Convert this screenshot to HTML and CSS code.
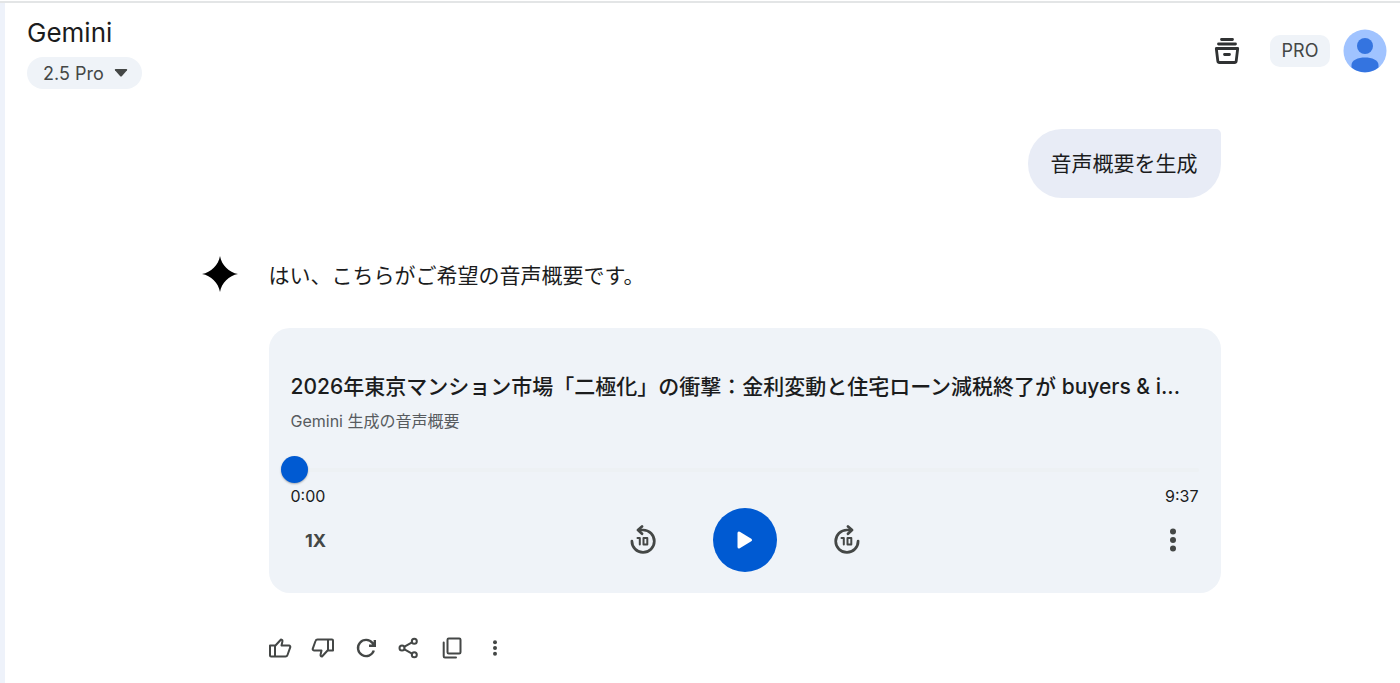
FILE: index.html
```html
<!DOCTYPE html>
<html lang="ja">
<head>
  <meta charset="UTF-8">
  <meta name="viewport" content="width=device-width, initial-scale=1.0">
  <title>Gemini</title>
  <link rel="stylesheet" href="styles.css">
</head>
<body>
  <div class="app">
    <!-- Header -->
    <header class="header">
      <div class="brand">
        <h1>Gemini</h1>
        <div class="model">
          <select aria-label="モデル">
            <option>2.5 Pro</option>
          </select>
          <svg class="model-arrow" width="14" height="8" viewBox="0 0 14 8"><path d="M1.5 0h11q1.2.2.5 1.200L8 7q-1 1-2 0L1 1.200Q.3.200 1.500 0z" fill="currentColor"/></svg>
        </div>
      </div>
      <div class="account">
        <button class="icon-btn" aria-label="アーカイブ">
          <svg width="26" height="28" viewBox="0 0 26 28" fill="none" stroke="currentColor" stroke-width="2.800" stroke-linecap="round" stroke-linejoin="round">
            <path d="M7.500 2.500h11M4.500 7h17M2.300 11.500h21.400l-1.500 12.500q-.2 1.500-1.700 1.500h-15q-1.500 0-1.700-1.500zM10.500 17.500h5"/>
          </svg>
        </button>
        <span class="badge">PRO</span>
        <button class="avatar" aria-label="アカウント">
          <svg width="44" height="44" viewBox="0 0 44 44">
            <circle cx="22" cy="22" r="21.500" fill="#a0c3ff"/>
            <circle cx="22" cy="17" r="8" fill="#3474e0"/>
            <path d="M8.500 38.500V36C8.500 31 15 28.500 22 28.500S35.500 31 35.500 36v2.500A21.500 21.500 0 0 1 8.500 38.500z" fill="#3474e0"/>
          </svg>
        </button>
      </div>
    </header>

    <!-- Conversation -->
    <main class="chat">
      <p class="prompt">音声概要を生成</p>

      <div class="reply">
        <svg class="spark" width="36" height="36" viewBox="0 0 36 36"><path d="M18 0C19.500 9 27 16.500 36 18 27 19.500 19.500 27 18 36 16.500 27 9 19.500 0 18 9 16.500 16.500 9 18 0z" fill="#000"/></svg>
        <div class="reply-body">
          <p class="answer">はい、こちらがご希望の音声概要です。</p>

          <section class="player">
            <h2>2026年東京マンション市場「二極化」の衝撃：金利変動と住宅ローン減税終了が buyers &amp; i...</h2>
            <p class="subtitle">Gemini 生成の音声概要</p>
            <input class="seek" type="range" min="0" max="577" value="0" aria-label="再生位置">
            <div class="times"><span>0:00</span><span>9:37</span></div>
            <div class="controls">
              <button class="speed">1X</button>
              <div class="transport">
                <button class="skip" aria-label="10秒戻る">
                  <svg width="28" height="30" viewBox="0 0 28 30" fill="none" stroke="currentColor" stroke-width="2.700" stroke-linecap="round" stroke-linejoin="round">
                    <path d="M2.900 16A11.200 11.200 0 1 0 14.100 5H9.500"/>
                    <path d="M13 1.500 9 5l4 3.800"/>
                    <path stroke-width="2" d="M8.500 13h2.300v6.500M14.500 13h3.800v6.500h-3.800z"/>
                  </svg>
                </button>
                <button class="play" aria-label="再生">
                  <svg width="18" height="20" viewBox="0 0 18 20"><path d="M3 3v14l11.500-7z" fill="#fff" stroke="#fff" stroke-width="3" stroke-linejoin="round"/></svg>
                </button>
                <button class="skip" aria-label="10秒進む">
                  <svg width="28" height="30" viewBox="0 0 28 30" fill="none" stroke="currentColor" stroke-width="2.700" stroke-linecap="round" stroke-linejoin="round">
                    <path d="M25.100 16A11.200 11.200 0 1 1 13.900 5H18.500"/>
                    <path d="M15 1.500 19 5l-4 3.800"/>
                    <path stroke-width="2" d="M8.500 13h2.300v6.500M14.500 13h3.800v6.500h-3.800z"/>
                  </svg>
                </button>
              </div>
              <button class="more" aria-label="その他">
                <svg width="8" height="24" viewBox="0 0 8 24" fill="currentColor"><circle cx="4" cy="3.500" r="3"/><circle cx="4" cy="12" r="3"/><circle cx="4" cy="20.500" r="3"/></svg>
              </button>
            </div>
          </section>

          <div class="actions">
            <button aria-label="良い回答">
              <svg width="24" height="24" viewBox="0 0 24 24"><path d="M2 9.500h5v11H3q-1 0-1-1zM7 10l6-6.500q1.800.3 1.400 2L13.500 9.500H21q1.500.2 1.300 1.700L19.500 19q-.5 1.500-2 1.500H7z"/></svg>
            </button>
            <button aria-label="悪い回答">
              <svg width="24" height="24" viewBox="0 0 24 24"><path d="M22 14.500h-5v-11h4q1 0 1 1zM17 14l-6 6.500q-1.800-.3-1.400-2l.9-4H3q-1.500-.2-1.300-1.700L4.500 5q.5-1.500 2-1.500H17z"/></svg>
            </button>
            <button aria-label="やり直す">
              <svg class="bold" width="24" height="24" viewBox="0 0 24 24"><path d="M19.800 14.500A8.100 8.100 0 1 1 18.500 7L20 9M20.800 4v5.800H15"/></svg>
            </button>
            <button aria-label="共有">
              <svg width="24" height="24" viewBox="0 0 24 24"><path d="M7.500 10.700 15 6.300M7.500 13.300l7.500 4.400"/><circle cx="5" cy="12" r="2.500"/><circle cx="17.300" cy="5.200" r="2.500"/><circle cx="17.300" cy="18.800" r="2.500"/></svg>
            </button>
            <button aria-label="コピー">
              <svg width="24" height="24" viewBox="0 0 24 24"><rect x="7.500" y="2.500" width="13" height="15" rx="1.200"/><path d="M3.700 6.500v13.700q0 1.200 1.200 1.200H16"/></svg>
            </button>
            <button aria-label="その他">
              <svg class="dots" width="24" height="24" viewBox="0 0 24 24"><circle cx="12" cy="6.200" r="2"/><circle cx="12" cy="12" r="2"/><circle cx="12" cy="17.800" r="2"/></svg>
            </button>
          </div>
        </div>
      </div>
    </main>
  </div>
</body>
</html>
```
FILE: styles.css
```css
* {
  box-sizing: border-box;
}
body {
  margin: 0;
  padding-top: 1px;
  background: #fff;
  color: #1b1c1d;
  font-family: Inter, "Noto Sans CJK JP", sans-serif;
}
h1, h2, p {
  margin: 0;
  font-weight: 400;
}
button {
  display: flex;
  align-items: center;
  justify-content: center;
  padding: 0;
  border: 0;
  background: none;
  color: #444746;
  font-family: inherit;
  cursor: pointer;
}

.app {
  min-height: calc(100vh - 1px);
  border-top: 2px solid #e3e5e6;
  background: linear-gradient(to right, #eef2fa 5px, #fff 5px);
  padding-left: 5px;
}

/* Header */
.header {
  display: flex;
  justify-content: space-between;
  padding: 14px 13px 0 22px;
}
.brand h1 {
  font-size: 26px;
  line-height: 32px;
}
.model {
  position: relative;
  width: 115px;
  margin-top: 8px;
  color: #444746;
}
.model select {
  display: block;
  width: 100%;
  height: 32px;
  padding: 0 16px;
  border: 0;
  border-radius: 16px;
  background: #eff3f8;
  color: inherit;
  font-family: inherit;
  font-size: 18px;
  appearance: none;
}
.model-arrow {
  position: absolute;
  right: 14px;
  top: 12px;
  pointer-events: none;
}
.account {
  display: flex;
  align-items: center;
  align-self: flex-start;
  margin-top: 12px;
}
.icon-btn {
  width: 44px;
  height: 44px;
  margin-right: 21px;
  color: #303233;
}
.badge {
  width: 60px;
  margin-right: 13px;
  border-radius: 10px;
  background: #eff3f8;
  color: #444746;
  font-size: 18px;
  line-height: 32px;
  text-align: center;
}
.avatar {
  border-radius: 50%;
}

/* Conversation */
.chat {
  display: flex;
  flex-direction: column;
  max-width: 1036px;
  margin: 40px auto 0;
  padding-left: 17px;
}
.prompt {
  align-self: flex-end;
  padding: 20px 23px;
  border-radius: 34px 5px 34px 34px;
  background: #e8ecf6;
  font-size: 21px;
  line-height: 29px;
}
.reply {
  display: grid;
  grid-template-columns: 36px minmax(0, 1fr);
  column-gap: 31px;
  margin-top: 58px;
}
.answer {
  font-size: 21px;
  line-height: 40px;
}

/* Audio player */
.player {
  margin-top: 32px;
  padding: 39px 22px 21px;
  border-radius: 21px;
  background: #eff3f8;
}
.player h2 {
  overflow: hidden;
  font-size: 21px;
  font-weight: 500;
  line-height: 40px;
  text-overflow: ellipsis;
  white-space: nowrap;
}
.subtitle {
  margin-top: 2px;
  color: #575b5f;
  font-size: 16px;
  line-height: 24px;
}
.seek {
  display: block;
  width: calc(100% + 10px);
  height: 28px;
  margin: 23px 0 0 -10px;
  background: none;
  appearance: none;
}
.seek::-webkit-slider-runnable-track {
  height: 4px;
  border-radius: 2px;
  background: #edf1f4;
}
.seek::-webkit-slider-thumb {
  width: 27px;
  height: 27px;
  margin-top: -12px;
  border-radius: 50%;
  background: #005ad2;
  box-shadow: 0 1px 2px rgba(0, 0, 0, 0.3);
  appearance: none;
}
.times {
  display: flex;
  justify-content: space-between;
  font-size: 16px;
  line-height: 24px;
}
.controls {
  display: grid;
  grid-template-columns: 1fr auto 1fr;
  align-items: center;
}
.speed {
  width: 50px;
  height: 48px;
  font-size: 18px;
  font-weight: 700;
}
.transport {
  display: flex;
  align-items: center;
  gap: 46px;
}
.skip {
  width: 48px;
  height: 48px;
}
.play {
  width: 64px;
  height: 64px;
  border-radius: 50%;
  background: #005ad2;
}
.more {
  justify-self: end;
  width: 52px;
  height: 48px;
}

/* Feedback buttons */
.actions {
  display: flex;
  margin: 33px 0 0 -10px;
}
.actions button {
  width: 43px;
  height: 43px;
}
.actions svg {
  fill: none;
  stroke: currentColor;
  stroke-width: 2;
  stroke-linejoin: round;
  stroke-linecap: round;
}
.actions .bold {
  stroke-width: 2.4;
  stroke-linecap: butt;
  stroke-linejoin: miter;
}
.actions .dots {
  fill: currentColor;
  stroke: none;
}
```
